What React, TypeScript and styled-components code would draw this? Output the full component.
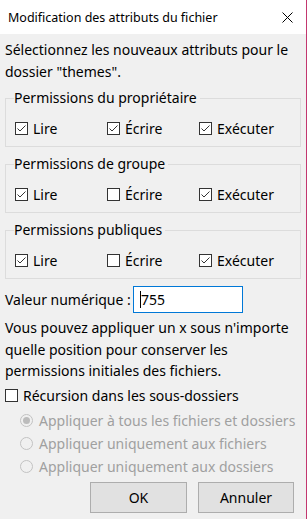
import React from "react";
import styled, { createGlobalStyle } from "styled-components";

const GlobalStyle = createGlobalStyle`
  html, body {
    margin: 0;
    padding: 0;
    background: #f0f0f0;
  }
  body {
    font-family: "Noto Sans", "Open Sans", sans-serif;
    color: #000;
  }
`;

const Window = styled.div`
  width: 307px;
  height: 519px;
  box-sizing: border-box;
  border-right: 1px solid #c3376f;
  background: #f0f0f0;
  display: flex;
  flex-direction: column;
  overflow: hidden;
`;

const TitleBar = styled.div`
  height: 34px;
  flex-shrink: 0;
  background: #fff;
  display: flex;
  align-items: center;
  justify-content: space-between;
  padding: 0 13px 0 8px;
  font-size: 12.5px;
`;

const Body = styled.div`
  padding: 5px 5px 0 5px;
  font-size: 14px;
`;

const Text = styled.p`
  margin: 0;
  line-height: 21.5px;
`;

const Intro = styled(Text)`
  margin-bottom: 6px;
`;

const Group = styled.fieldset`
  margin: 0 0 7px 0;
  padding: 10px 0 8px 9px;
  border: 1px solid #dcdcdc;
  min-width: 0;
  > legend {
    padding: 0 3px 0 0;
    margin-left: -1px;
    line-height: 20px;
    font-size: 14px;
  }
`;

const CheckGrid = styled.div`
  display: grid;
  grid-template-columns: 92px 92px 92px;
`;

const Option = styled.label<{ $disabled?: boolean }>`
  display: flex;
  align-items: center;
  gap: ${(p) => (p.$disabled ? "6px" : "5px")};
  height: ${(p) => (p.$disabled ? "23px" : "20px")};
  color: ${(p) => (p.$disabled ? "#a0a0a0" : "#000")};
  white-space: nowrap;
`;

const ValueRow = styled.div`
  display: flex;
  align-items: center;
  > span {
    width: 128px;
  }
`;

const FakeInput = styled.div`
  width: 110px;
  height: 27px;
  box-sizing: border-box;
  background: #fff;
  border: 1px solid #0078d7;
  display: flex;
  align-items: center;
  padding-left: 6px;
`;

const Caret = styled.span`
  width: 1px;
  height: 17px;
  background: #000;
`;

const Note = styled(Text)`
  margin-top: 4px;
`;

const RecursionRow = styled(Option)`
  height: 23px;
  margin-top: 2px;
`;

const RadioList = styled.div`
  padding-left: 15px;
  margin-top: 2px;
`;

const ButtonRow = styled.div`
  display: flex;
  justify-content: flex-end;
  gap: 11px;
  padding-right: 7px;
  margin-top: 4px;
`;

const Button = styled.button<{ $w: number }>`
  width: ${(p) => p.$w}px;
  height: 31px;
  background: #e1e1e1;
  border: 1px solid #adadad;
  font-family: inherit;
  font-size: 14px;
  color: #000;
  padding: 0;
`;

function CheckBox({ checked }: { checked?: boolean }) {
  return (
    <svg width="13" height="13" viewBox="0 0 13 13" style={{ flexShrink: 0 }}>
      <rect x="0.5" y="0.5" width="12" height="12" fill="#fff" stroke="#333" />
      {checked && (
        <polyline points="2.5,6.5 5,9 10.5,3.5" fill="none" stroke="#333" strokeWidth="1" />
      )}
    </svg>
  );
}

function Radio({ checked }: { checked?: boolean }) {
  return (
    <svg width="13" height="13" viewBox="0 0 13 13" style={{ flexShrink: 0 }}>
      <circle cx="6.5" cy="6.5" r="6" fill="#f0f0f0" stroke="#c2c2c2" />
      {checked && <circle cx="6.5" cy="6.5" r="3.5" fill="#bcbcbc" />}
    </svg>
  );
}

const groups = [
  { title: "Permissions du propriétaire", values: [true, true, true] },
  { title: "Permissions de groupe", values: [true, false, true] },
  { title: "Permissions publiques", values: [true, false, true] },
];

const labels = ["Lire", "Écrire", "Exécuter"];

export default function App() {
  return (
    <Window>
      <GlobalStyle />
      <TitleBar>
        <span>Modification des attributs du fichier</span>
        <svg width="11" height="11" viewBox="0 0 11 11">
          <path d="M0.5 0.5 L10.5 10.5 M10.5 0.5 L0.5 10.5" stroke="#000" strokeWidth="1" />
        </svg>
      </TitleBar>
      <Body>
        <Intro>
          Sélectionnez les nouveaux attributs pour le dossier "themes".
        </Intro>
        {groups.map((g) => (
          <Group key={g.title}>
            <legend>{g.title}</legend>
            <CheckGrid>
              {labels.map((l, i) => (
                <Option key={l}>
                  <CheckBox checked={g.values[i]} />
                  {l}
                </Option>
              ))}
            </CheckGrid>
          </Group>
        ))}
        <ValueRow>
          <span>Valeur numérique :</span>
          <FakeInput>
            <Caret />
            755
          </FakeInput>
        </ValueRow>
        <Note>
          Vous pouvez appliquer un x sous n'importe quelle position pour
          conserver les permissions initiales des fichiers.
        </Note>
        <RecursionRow>
          <CheckBox />
          Récursion dans les sous-dossiers
        </RecursionRow>
        <RadioList>
          <Option $disabled>
            <Radio checked />
            Appliquer à tous les fichiers et dossiers
          </Option>
          <Option $disabled>
            <Radio />
            Appliquer uniquement aux fichiers
          </Option>
          <Option $disabled>
            <Radio />
            Appliquer uniquement aux dossiers
          </Option>
        </RadioList>
        <ButtonRow>
          <Button $w={97}>OK</Button>
          <Button $w={96}>Annuler</Button>
        </ButtonRow>
      </Body>
    </Window>
  );
}
